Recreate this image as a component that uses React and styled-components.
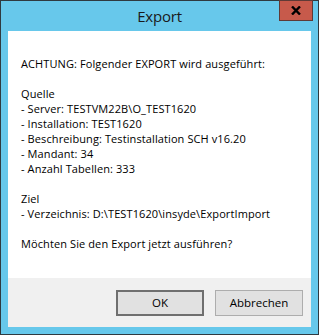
import React from "react";
import styled, { createGlobalStyle } from "styled-components";

const Global = createGlobalStyle`
  html, body { margin: 0; padding: 0; background: #ffffff; }
  body { font-family: "Open Sans", "Noto Sans", sans-serif; }
`;

const Window = styled.div`
  box-sizing: border-box;
  width: 319px;
  height: 335px;
  border: 1px solid #2f3a40;
  background: #67c8eb;
  display: flex;
  flex-direction: column;
  padding-bottom: 7px;
`;

const TitleBar = styled.div`
  height: 30px;
  display: grid;
  grid-template-columns: 1fr auto 1fr;
  align-items: start;
  flex: none;
`;

const Title = styled.div`
  grid-column: 2;
  font-family: "Open Sans", "Noto Sans", sans-serif;
  font-size: 15px;
  line-height: 20px;
  color: #1a1a1a;
  padding-top: 5px;
  letter-spacing: -0.2px;
`;

const CloseButton = styled.div`
  grid-column: 3;
  justify-self: end;
  margin-right: 5px;
  box-sizing: border-box;
  width: 34px;
  height: 21px;
  margin-top: -1px;
  background: #c75a4b;
  border: 1px solid #5f3a36;
  display: flex;
  align-items: center;
  justify-content: center;
`;

const Client = styled.div`
  margin: 0 7px;
  flex: 1;
  display: flex;
  flex-direction: column;
`;

const Body = styled.div`
  flex: 1;
  background: #ffffff;
  padding: 25px 12px 0 13px;
  font-family: "Open Sans", "Noto Sans", sans-serif;
  font-size: 11px;
  line-height: 15px;
  color: #000000;
  letter-spacing: 0.1px;
`;

const Line = styled.div`
  white-space: pre;
  height: 15px;
`;

const Footer = styled.div`
  height: 49px;
  flex: none;
  background: #f0f0f0;
  display: flex;
  justify-content: flex-end;
  align-items: center;
  gap: 11px;
  padding-right: 8px;
  padding-top: 1px;
  box-sizing: border-box;
`;

const Button = styled.button`
  box-sizing: border-box;
  width: 88px;
  height: 26px;
  margin: 0;
  padding: 0;
  background: #e1e1e1;
  border: ${(p) => (p.$default ? "2px solid #6f6f6f" : "1px solid #adadad")};
  font-family: "Open Sans", "Noto Sans", sans-serif;
  font-size: 11.5px;
  color: #000;
  display: flex;
  align-items: center;
  justify-content: center;
  padding-bottom: 1px;
`;

const lines = [
  "ACHTUNG: Folgender EXPORT wird ausgeführt:",
  "",
  "Quelle",
  "- Server: TESTVM22B\\O_TEST1620",
  "- Installation: TEST1620",
  "- Beschreibung: Testinstallation SCH v16.20",
  "- Mandant: 34",
  "- Anzahl Tabellen: 333",
  "",
  "Ziel",
  "- Verzeichnis: D:\\TEST1620\\insyde\\ExportImport",
  "",
  "Möchten Sie den Export jetzt ausführen?",
];

export default function App() {
  return (
    <>
      <Global />
      <Window>
        <TitleBar>
          <Title>Export</Title>
          <CloseButton>
            <svg width="10" height="9" viewBox="0 0 10 9">
              <path d="M1 0.5 L9 8.5 M9 0.5 L1 8.5" stroke="#000" strokeWidth="2.4" />
            </svg>
          </CloseButton>
        </TitleBar>
        <Client>
          <Body>
            {lines.map((l, i) => (
              <Line key={i}>{l}</Line>
            ))}
          </Body>
          <Footer>
            <Button $default>OK</Button>
            <Button>Abbrechen</Button>
          </Footer>
        </Client>
      </Window>
    </>
  );
}
